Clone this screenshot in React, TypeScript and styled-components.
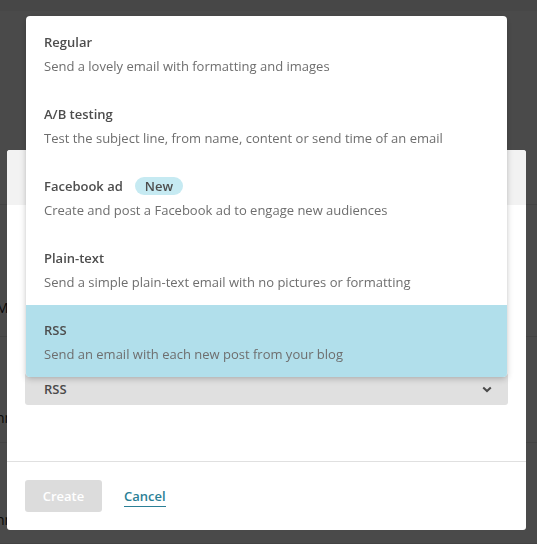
import styled, { createGlobalStyle } from "styled-components";

const GlobalStyle = createGlobalStyle`
  html, body {
    margin: 0;
    padding: 0;
  }
  body {
    font-family: "Open Sans", "Liberation Sans", sans-serif;
    overflow: hidden;
  }
`;

const Page = styled.div`
  height: 544px;
  background: #ffffff;
  overflow: hidden;
  color: #222222;
  font-size: 14px;
`;

const TopBar = styled.div`
  height: 11px;
  background: #f4f4f4;
`;

const PageRow = styled.div<{ $height: number; $pad: number }>`
  height: ${({ $height }) => $height}px;
  box-sizing: border-box;
  padding-top: ${({ $pad }) => $pad}px;
  border-bottom: 1px solid #e6e6e6;
  margin-left: -4px;
  line-height: 20px;
`;

const Overlay = styled.div`
  position: fixed;
  inset: 0;
  background: rgba(0, 0, 0, 0.71);
  padding: 150px 11px 0 7px;
`;

const Modal = styled.div`
  width: 519px;
  height: 380px;
  background: #ffffff;
  border-radius: 3px;
  display: flex;
  flex-direction: column;
`;

const ModalHeader = styled.div`
  height: 55px;
  background: #f2f2f2;
  border-radius: 3px 3px 0 0;
`;

const ModalBody = styled.div`
  height: 257px;
  box-sizing: border-box;
  padding: 168px 18px 0 18px;
  border-bottom: 1px solid #e0e0e0;
`;

const SelectWrap = styled.div`
  position: relative;
`;

const SelectBox = styled.div`
  height: 32px;
  background: #e0e0e0;
  border-radius: 3px;
  display: flex;
  align-items: center;
  justify-content: space-between;
  padding: 0 16px 0 19px;
  font-size: 13px;
  font-weight: 600;
  color: #4a4a4a;
`;

const Menu = styled.div`
  position: absolute;
  left: 1px;
  right: 1px;
  bottom: calc(100% - 4px);
  background: #ffffff;
  border-radius: 4px;
  box-shadow: 0 2px 6px rgba(0, 0, 0, 0.22), 0 0 1px rgba(0, 0, 0, 0.15);
  overflow: hidden;
  padding-top: 1px;
`;

const MenuItem = styled.div<{ $active?: boolean }>`
  height: 72px;
  box-sizing: border-box;
  padding: 15px 18px 0 18px;
  background: ${({ $active }) => ($active ? "#b1dfeb" : "transparent")};
`;

const ItemTitle = styled.div`
  display: flex;
  align-items: center;
  gap: 12px;
  height: 20px;
  margin-bottom: 4px;
  font-size: 13px;
  font-weight: 600;
  color: #4d4d4d;
`;

const Badge = styled.span`
  background: #c6eaf2;
  color: #4d4d4d;
  border-radius: 9px;
  height: 18px;
  line-height: 18px;
  padding: 0 10px;
  font-size: 13px;
  font-weight: 600;
`;

const ItemDesc = styled.div`
  line-height: 20px;
  font-size: 13px;
  color: #6e6e6e;
`;

const ModalFooter = styled.div`
  display: flex;
  align-items: center;
  gap: 22px;
  padding: 18px;
`;

const CreateButton = styled.button`
  width: 77px;
  height: 32px;
  border: none;
  border-radius: 3px;
  background: #dcdcdc;
  color: #ffffff;
  font-family: inherit;
  font-size: 13px;
  font-weight: 600;
  cursor: default;
`;

const CancelLink = styled.a`
  color: #2b7f96;
  font-size: 13px;
  font-weight: 600;
  text-decoration: none;
  border-bottom: 1px solid #2b7f96;
  line-height: 17px;
  padding-bottom: 1px;
  margin-top: 2px;
  cursor: pointer;
`;

const Chevron = () => (
  <svg width="10" height="7" viewBox="0 0 10 7">
    <path d="M1.2 1.4 L5 5 L8.8 1.4" fill="none" stroke="#4a4a4a" strokeWidth="2" />
  </svg>
);

const options = [
  { title: "Regular", desc: "Send a lovely email with formatting and images" },
  { title: "A/B testing", desc: "Test the subject line, from name, content or send time of an email" },
  { title: "Facebook ad", desc: "Create and post a Facebook ad to engage new audiences", badge: "New" },
  { title: "Plain-text", desc: "Send a simple plain-text email with no pictures or formatting" },
  { title: "RSS", desc: "Send an email with each new post from your blog" },
];

export default function App() {
  const selected = "RSS";
  return (
    <>
      <GlobalStyle />
      <Page>
        <TopBar />
        <PageRow $height={194} $pad={0} />
        <PageRow $height={132} $pad={93}>Mn</PageRow>
        <PageRow $height={106} $pad={71}>nm</PageRow>
        <PageRow $height={101} $pad={67}>nm</PageRow>
      </Page>
      <Overlay>
        <Modal>
          <ModalHeader />
          <ModalBody>
            <SelectWrap>
              <Menu>
                {options.map((o) => (
                  <MenuItem key={o.title} $active={o.title === selected}>
                    <ItemTitle>
                      {o.title}
                      {o.badge && <Badge>{o.badge}</Badge>}
                    </ItemTitle>
                    <ItemDesc>{o.desc}</ItemDesc>
                  </MenuItem>
                ))}
              </Menu>
              <SelectBox>
                {selected}
                <Chevron />
              </SelectBox>
            </SelectWrap>
          </ModalBody>
          <ModalFooter>
            <CreateButton>Create</CreateButton>
            <CancelLink>Cancel</CancelLink>
          </ModalFooter>
        </Modal>
      </Overlay>
    </>
  );
}
